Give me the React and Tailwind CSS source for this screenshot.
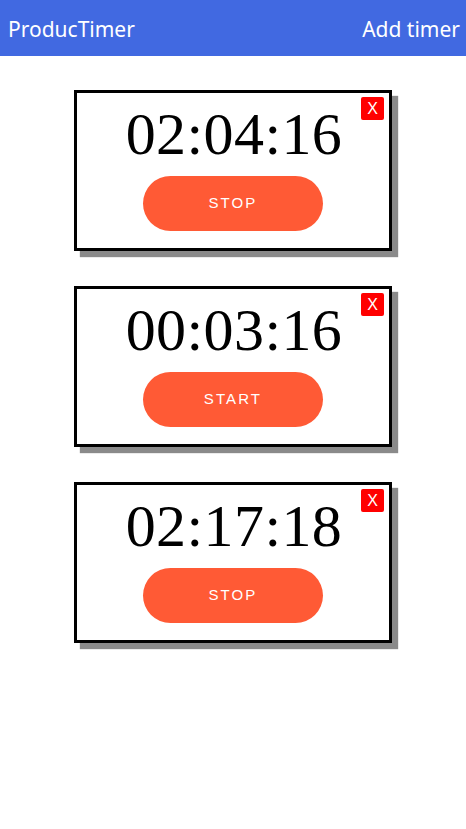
import React, { useState } from 'react';

const initialTimers = [
  { id: 1, time: '02:04:16', running: true },
  { id: 2, time: '00:03:16', running: false },
  { id: 3, time: '02:17:18', running: true },
];

const TimerCard = ({ timer, onToggle, onRemove }) => {
  return (
    <div className="relative w-[318px] h-[161px] bg-white border-[3px] border-black shadow-[6px_6px_1px_#8a8a8a] flex flex-col items-center">
      <button
        onClick={() => onRemove(timer.id)}
        className="absolute top-[4px] right-[5px] w-[23px] h-[23px] bg-[#ff0000] rounded-[2px] text-white text-[16px] leading-none flex items-center justify-center font-['Liberation_Sans',sans-serif]"
      >
        X
      </button>
      <div className="pt-[11px] pl-[2px] text-[60px] leading-none tracking-[0.4px] text-black font-['Liberation_Serif',serif]">
        {timer.time}
      </div>
      <button
        onClick={() => onToggle(timer.id)}
        className="mt-[12px] w-[180px] h-[55px] rounded-full bg-[#ff5a35] text-white text-[15px] tracking-[0.14em] font-['Liberation_Sans',sans-serif]"
      >
        {timer.running ? 'STOP' : 'START'}
      </button>
    </div>
  );
};

export default function App() {
  const [timers, setTimers] = useState(initialTimers);

  const toggle = (id) =>
    setTimers((ts) => ts.map((t) => (t.id === id ? { ...t, running: !t.running } : t)));
  const remove = (id) => setTimers((ts) => ts.filter((t) => t.id !== id));

  return (
    <div className="w-[466px] min-h-[829px] bg-white">
      {/* Header */}
      <div className="h-[56px] bg-[#4169e1] flex items-center justify-between pl-[8px] pr-[6px] pt-[3px] text-white text-[21px] font-['Noto_Sans',sans-serif]">
        <span>ProducTimer</span>
        <span>Add timer</span>
      </div>

      {/* Timer list */}
      <div className="flex flex-col items-center gap-[35px] pt-[34px]">
        {timers.map((t) => (
          <TimerCard key={t.id} timer={t} onToggle={toggle} onRemove={remove} />
        ))}
      </div>
    </div>
  );
}
